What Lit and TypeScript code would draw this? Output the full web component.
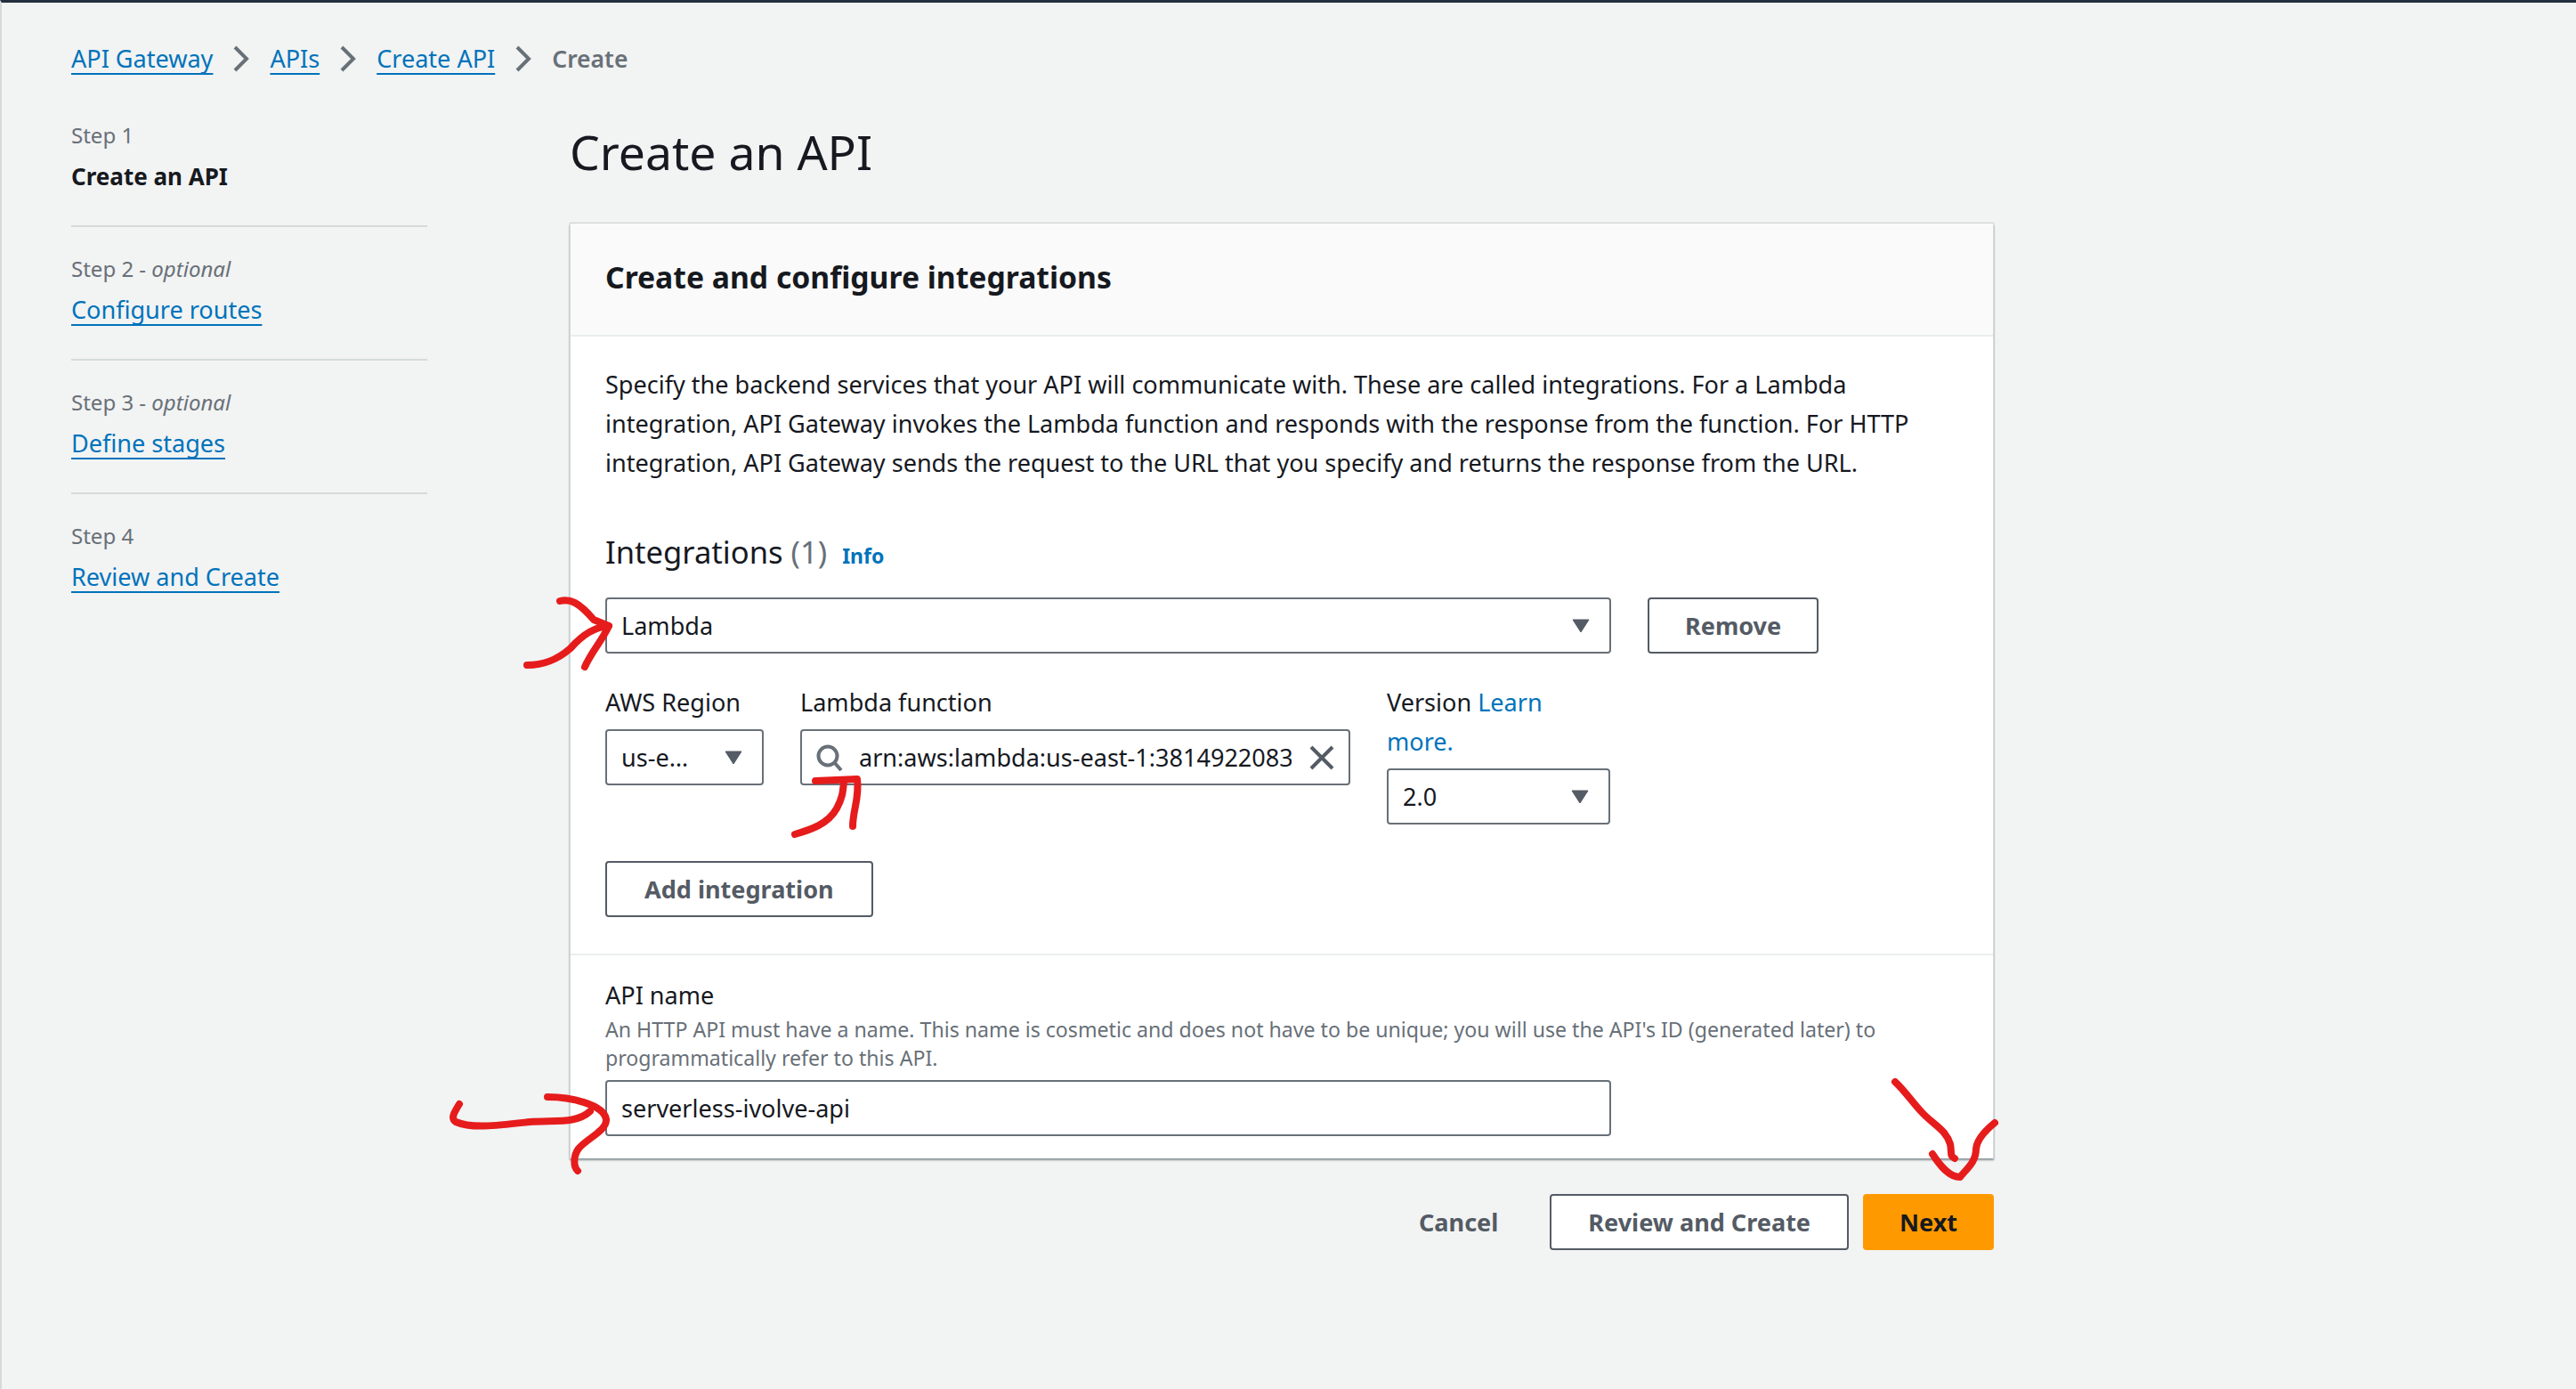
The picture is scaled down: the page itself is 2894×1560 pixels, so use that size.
import { LitElement, css, html, svg, type TemplateResult } from "lit";
import { customElement } from "lit/decorators.js";

const STEPS = [
  { label: "Step 1", optional: false, name: "Create an API", current: true },
  { label: "Step 2", optional: true, name: "Configure routes", current: false },
  { label: "Step 3", optional: true, name: "Define stages", current: false },
  { label: "Step 4", optional: false, name: "Review and Create", current: false },
];

const chevron = html`<svg class="chevron" viewBox="0 0 18 30" width="18" height="30">
  <path d="M2 2 L15 15 L2 28" fill="none" stroke="#687078" stroke-width="4" />
</svg>`;

const caret = html`<svg class="caret" viewBox="0 0 20 16" width="20" height="16">
  <path d="M1 1 H19 L10 15 Z" fill="#545b64" stroke="#545b64" stroke-width="1" stroke-linejoin="round" />
</svg>`;

// the hand-drawn red arrows, in page coordinates
const MARKS = [
  "M629 675 C640 672 650 676 667 696 L684 703 C668 704 655 712 641 728 C625 742 610 747 592 747",
  "M684 703 C676 720 664 733 657 749",
  "M893 937 C910 932 930 926 940 908 C947 895 947 888 948 878",
  "M916 877 L963 875 C966 895 958 910 958 928",
  "M516 1240 C510 1250 506 1256 512 1260 C530 1268 560 1264 595 1260 C625 1258 648 1262 663 1248",
  "M615 1232 C640 1232 678 1240 681 1257 C682 1270 660 1278 650 1290 C644 1298 644 1310 649 1315",
  "M2129 1215 C2140 1225 2150 1240 2158 1248 C2170 1262 2186 1268 2191 1285 C2193 1295 2190 1298 2196 1301",
  "M2241 1261 C2230 1270 2221 1280 2220 1290 C2220 1305 2210 1312 2202 1322 C2190 1322 2180 1310 2171 1296",
];

@customElement("app-root")
export class AppRoot extends LitElement {
  renderStep(step: (typeof STEPS)[number]): TemplateResult {
    return html`<li class="step">
      <div class="step-label">
        ${step.label}${step.optional ? html` - <i>optional</i>` : ""}
      </div>
      ${step.current
        ? html`<div class="step-name current">${step.name}</div>`
        : html`<a class="step-name link" href="#">${step.name}</a>`}
    </li>`;
  }

  render(): TemplateResult {
    return html`
      <nav class="breadcrumbs">
        <a class="link" href="#">API Gateway</a>${chevron}
        <a class="link" href="#">APIs</a>${chevron}
        <a class="link" href="#">Create API</a>${chevron}
        <span class="crumb-current">Create</span>
      </nav>

      <div class="layout">
        <ul class="steps">
          ${STEPS.map((s) => this.renderStep(s))}
        </ul>

        <main class="content">
          <h1>Create an API</h1>

          <section class="card">
            <header class="card-header"><h2>Create and configure integrations</h2></header>

            <div class="card-body">
              <p class="intro">
                Specify the backend services that your API will communicate with. These are called
                integrations. For a Lambda integration, API Gateway invokes the Lambda function and
                responds with the response from the function. For HTTP integration, API Gateway
                sends the request to the URL that you specify and returns the response from the URL.
              </p>

              <h3>Integrations <span class="count">(1)</span> <a class="info" href="#">Info</a></h3>

              <div class="row type-row">
                <div class="control type-select"><span>Lambda</span>${caret}</div>
                <button class="btn remove">Remove</button>
              </div>

              <div class="row fields">
                <div class="field region">
                  <label>AWS Region</label>
                  <div class="control"><span>us-e…</span>${caret}</div>
                </div>
                <div class="field fn">
                  <label>Lambda function</label>
                  <div class="control search">
                    <svg class="search-icon" viewBox="0 0 30 30" width="30" height="30">
                      <circle cx="13" cy="13" r="10.5" fill="none" stroke="#687078" stroke-width="4" />
                      <path d="M20 20 L28 29" fill="none" stroke="#687078" stroke-width="4" />
                    </svg>
                    <span class="arn">arn:aws:lambda:us-east-1:381492208330:function:serverless</span>
                    <svg class="clear" viewBox="0 0 28 28" width="28" height="28">
                      <path d="M2 2 L26 26 M26 2 L2 26" fill="none" stroke="#545b64" stroke-width="4" />
                    </svg>
                  </div>
                </div>
                <div class="field version">
                  <label>Version <a class="plain" href="#">Learn more.</a></label>
                  <div class="control"><span>2.0</span>${caret}</div>
                </div>
              </div>

              <button class="btn add">Add integration</button>
            </div>

            <div class="card-body name-section">
              <div class="name-label">API name</div>
              <div class="hint">
                An HTTP API must have a name. This name is cosmetic and does not have to be unique;
                you will use the API's ID (generated later) to programmatically refer to this API.
              </div>
              <div class="control name-input"><span>serverless-ivolve-api</span></div>
            </div>
          </section>

          <footer class="actions">
            <button class="btn cancel">Cancel</button>
            <button class="btn review">Review and Create</button>
            <button class="btn primary">Next</button>
          </footer>
        </main>
      </div>

      <svg class="marks" viewBox="0 0 2894 1560" width="2894" height="1560">
        ${MARKS.map(
          (d) => svg`<path d=${d} fill="none" stroke="#e61c1c" stroke-width="8" stroke-linecap="round" stroke-linejoin="round" />`
        )}
      </svg>
    `;
  }

  static styles = css`
    :host {
      display: block;
      position: relative;
      box-sizing: border-box;
      width: 2894px;
      height: 1560px;
      overflow: hidden;
      background: #f2f3f3;
      border-top: 3px solid #232f3e;
      border-left: 2px solid #d5dbdb;
      color: #16191f;
      font-family: "Noto Sans", "Open Sans", sans-serif;
      font-size: 27.05px;
      line-height: 44px;
    }

    * {
      box-sizing: border-box;
    }

    a {
      color: #0073bb;
      text-decoration: none;
    }

    .link {
      text-decoration: underline;
      text-decoration-thickness: 2px;
      text-underline-offset: 6px;
    }

    .breadcrumbs {
      display: flex;
      align-items: center;
      height: 36px;
      margin: 45px 0 0 78px;
      line-height: 36px;
    }

    .chevron {
      margin: 0 23px;
    }

    .crumb-current {
      color: #687078;
      font-size: 26.5px;
      font-weight: 600;
    }

    .layout {
      display: grid;
      grid-template-columns: 400px 1600px;
      column-gap: 160px;
      margin: 52px 0 0 78px;
    }

    .steps {
      list-style: none;
      margin: 0;
      padding: 0;
    }

    .step {
      padding: 31px 0 33px;
      border-top: 2px solid #d5dbdb;
    }

    .step:first-child {
      padding-top: 0;
      border-top: none;
    }

    .step:last-child {
      padding-bottom: 0;
    }

    .step-label {
      margin-bottom: 8px;
      color: #687078;
      font-size: 24px;
      line-height: 32px;
    }

    .step-name {
      display: inline-block;
      line-height: 44px;
    }

    .current {
      display: block;
      font-size: 26px;
      font-weight: 700;
    }

    .content {
      padding-top: 3px;
    }

    h1 {
      margin: 0 0 48px;
      font-size: 53.5px;
      font-weight: 400;
      line-height: 64px;
    }

    .card {
      background: #fff;
      border-left: 1px solid #d5dbdb;
      border-right: 1px solid #d5dbdb;
      box-shadow: 0 2px 2px rgba(0, 28, 36, 0.45), 0 -1px 1px rgba(0, 28, 36, 0.15);
    }

    .card-header {
      padding: 38px 39px 43px;
      background: #fafafa;
      border-bottom: 2px solid #eaeded;
    }

    h2 {
      margin: 0;
      font-size: 33.7px;
      font-weight: 700;
      line-height: 44px;
    }

    .card-body {
      padding: 32px 39px 41px;
      border-bottom: 2px solid #eaeded;
    }

    .intro {
      margin: 0 0 56px;
    }

    h3 {
      display: flex;
      align-items: baseline;
      gap: 9px;
      height: 44px;
      margin: 0 0 29px;
      font-size: 34.6px;
      font-weight: 400;
      line-height: 44px;
    }

    .count {
      color: #687078;
    }

    .info {
      margin-left: 8px;
      font-size: 23px;
      font-weight: 700;
    }

    .row {
      display: flex;
    }

    .type-row {
      gap: 41px;
    }

    .control {
      display: flex;
      align-items: center;
      justify-content: space-between;
      height: 63px;
      padding: 0 22px 0 16px;
      background: #fff;
      border: 2px solid #687078;
      border-radius: 4px;
    }

    .type-select {
      width: 1130px;
    }

    .fields {
      align-items: flex-start;
      gap: 41px;
      margin-top: 33px;
    }

    .field label {
      display: block;
      margin-bottom: 8px;
    }

    .region {
      width: 178px;
    }

    .fn {
      width: 618px;
    }

    .version {
      width: 251px;
    }

    .plain {
      text-decoration: none;
    }

    .search {
      padding: 0 16px;
    }

    .search-icon {
      flex: none;
    }

    .arn {
      flex: 1;
      min-width: 0;
      margin: 0 20px 0 18px;
      overflow: hidden;
      white-space: nowrap;
    }

    .clear {
      flex: none;
    }

    .btn {
      height: 63px;
      padding: 0 40px;
      background: #fff;
      border: 2px solid #545b64;
      border-radius: 4px;
      color: #545b64;
      font: inherit;
      font-weight: 700;
    }

    .add {
      display: block;
      margin-top: 41px;
      padding: 0 42px;
    }

    .name-section {
      padding: 23px 39px 25px;
      border-bottom: none;
    }

    .name-label {
      line-height: 44px;
    }

    .hint {
      color: #687078;
      font-size: 23.13px;
      line-height: 32px;
    }

    .name-input {
      width: 1130px;
      margin-top: 9px;
    }

    .actions {
      display: flex;
      justify-content: flex-end;
      gap: 16px;
      margin-top: 40px;
    }

    .cancel {
      margin-right: 0;
      background: none;
      border-color: transparent;
    }

    .review {
      padding: 0 41px;
    }

    .primary {
      padding: 0 39px;
      background: #ff9900;
      border-color: #ff9900;
      color: #16191f;
    }

    .marks {
      position: absolute;
      left: -2px;
      top: -3px;
      pointer-events: none;
    }
  `;
}

declare global {
  interface HTMLElementTagNameMap {
    "app-root": AppRoot;
  }
}
